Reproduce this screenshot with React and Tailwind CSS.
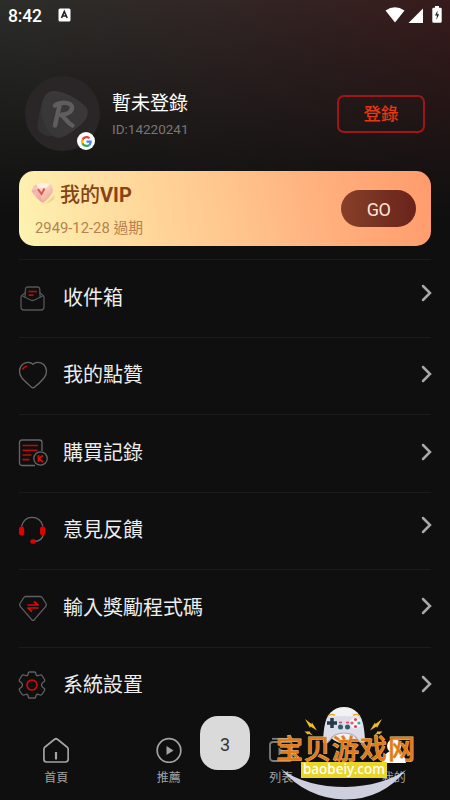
import React from 'react';

const InboxIcon = () => (
  <svg width="30" height="30" viewBox="0 0 30 30" fill="none" stroke="#555" strokeWidth="1.3" strokeLinejoin="round">
    <path d="M7.500 9.500 L4.500 12 Q3 13 3 14.500 V24 Q3 27 6 27 H23 Q26 27 26 24 V14.500 Q26 13 24.500 12 L21.500 9.500" />
    <path d="M3.500 12.500 L12.500 17 Q14.500 18 16.500 17 L25.500 12.500" />
    <path d="M7 14.500 L7.500 6 Q7.700 4 9.500 4 H19.500 Q21.500 4 21.700 6 L22.200 14.500" />
    <path d="M10.500 8.500 H19 M10.500 12.200 H15.500" stroke="#b80d0d" strokeWidth="1.700" />
  </svg>
);

const HeartIcon = () => (
  <svg width="30" height="30" viewBox="0 0 30 30" fill="none" stroke="#666" strokeWidth="1.300" strokeLinejoin="round">
    <path d="M15 4.300 C12.500 1.700 8 1.700 5 4 C0.500 7.500 0.500 14 4 18 C7 21.500 10.500 24.500 13.300 27 Q15 28.500 16.700 27 C20 24.500 23 21.500 26 18 C29.500 14 29.500 7.500 25 4 C22 1.700 17.500 1.700 15 4.300 Z" />
    <path d="M4.500 9.500 Q5.500 7.300 9 6" stroke="#c80d0d" strokeWidth="1.800" />
  </svg>
);

const RecordIcon = () => (
  <svg width="30" height="30" viewBox="0 0 30 30" fill="none" stroke="#666" strokeWidth="1.300">
    <path d="M17 27.500 H4 Q1.500 27.500 1.500 25 V4.500 Q1.500 2 4 2 H21.500 Q24 2 24 4.500 V13" />
    <path d="M4.500 7.500 H20 M4.500 12.300 H19.500 M4.500 17 H13.500 M4.500 21.700 H11.500" stroke="#b80d0d" strokeWidth="1.700" />
    <circle cx="22.500" cy="20.500" r="6.700" />
    <path d="M20.500 17.300 V24 M24.800 17.300 L21 20.800 L25 24" stroke="#d80c0c" strokeWidth="1.800" />
  </svg>
);

const HeadsetIcon = () => (
  <svg width="30" height="30" viewBox="0 0 30 30" fill="none">
    <path d="M3.500 11.500 C5 5.500 9 2.300 14 2.300 C19 2.300 23.500 5.500 25 11.500 M25.500 19 C24.500 24 21 26.500 16 26.500" stroke="#666" strokeWidth="1.300" />
    <rect x="1" y="11.500" width="5.200" height="9" rx="2.400" fill="#e30000" />
    <rect x="22" y="11.500" width="5.200" height="9" rx="2.400" fill="#e30000" />
    <rect x="12.300" y="24.300" width="5.700" height="4.500" rx="2.200" fill="#e30000" />
  </svg>
);

const GemIcon = () => (
  <svg width="30" height="30" viewBox="0 0 30 30" fill="none" stroke="#606060" strokeWidth="1.300" strokeLinejoin="round">
    <path d="M8 3.500 H22 Q23.500 3.500 24.500 5 L28 10.500 Q29 12 27.800 13.300 L16.300 26.700 Q15 28 13.700 26.700 L2.200 13.300 Q1 12 2 10.500 L5.500 5 Q6.500 3.500 8 3.500 Z" />
    <path d="M9.500 12 H20 L16 8.500 M20.500 15 H10 L14 18.500" stroke="#d90c0c" strokeWidth="1.700" />
  </svg>
);

const GearIcon = () => (
  <svg width="30" height="30" viewBox="0 0 30 30" fill="none" stroke="#606060" strokeWidth="1.300" strokeLinejoin="round">
    <path d="M11.300 2 H16.700 Q17.500 2 17.700 3 L18 4.500 Q18.300 6 20 5.700 L22 5 Q23.500 4.700 24.300 6 L26.500 9.500 Q27.200 10.800 26 11.700 L24.500 12.800 Q23.500 14 23.500 15 Q23.500 16 24.500 17.200 L26 18.300 Q27.200 19.200 26.500 20.500 L24.300 24 Q23.500 25.300 22 25 L20 24.300 Q18.300 24 18 25.500 L17.700 27 Q17.500 28 16.700 28 H11.300 Q10.500 28 10.300 27 L10 25.500 Q9.700 24 8 24.300 L6 25 Q4.500 25.300 3.700 24 L1.500 20.500 Q0.800 19.200 2 18.300 L3.500 17.200 Q4.500 16 4.500 15 Q4.500 14 3.500 12.800 L2 11.700 Q0.800 10.800 1.500 9.500 L3.700 6 Q4.500 4.700 6 5 L8 5.700 Q9.700 6 10 4.500 L10.300 3 Q10.500 2 11.300 2 Z" />
    <circle cx="14" cy="15" r="5" stroke="#c90d0d" strokeWidth="1.700" />
  </svg>
);

const menu = [
  { label: '收件箱', Icon: InboxIcon, shift: '-mt-[11px]' },
  { label: '我的點贊', Icon: HeartIcon, shift: '-mt-[4px]' },
  { label: '購買記錄', Icon: RecordIcon, shift: '-mt-[3px]' },
  { label: '意見反饋', Icon: HeadsetIcon, shift: '-mt-[11px]' },
  { label: '輸入獎勵程式碼', Icon: GemIcon, shift: '-mt-[4px]' },
  { label: '系統設置', Icon: GearIcon, shift: '-mt-[4px]' },
];

const StatusBar = () => (
  <div className="flex h-8 items-center pl-2 pr-[8px] text-white">
    <span className="text-[17.500px] leading-8 font-medium tracking-[-0.200px]">8:42</span>
    <svg className="-mt-[2px] ml-[16px]" width="13" height="14" viewBox="0 0 13 14">
      <rect x="0.500" y="0.500" width="12" height="13" rx="1.500" fill="#fff" />
      <path d="M3.500 10 L6.300 3.500 L9.200 10 M4.700 8 H8" fill="none" stroke="#222" strokeWidth="1.600" />
    </svg>
    <svg className="-mt-[2px] ml-auto" width="20" height="16" viewBox="0 0 20 16">
      <path d="M0.500 3.500 Q10 -3 19.500 3.500 L10 15.500 Z" fill="#fff" />
    </svg>
    <svg className="-mt-px ml-[3px]" width="15" height="15" viewBox="0 0 15 15">
      <path d="M15 0.500 V15 H0.500 Z" fill="#fff" />
    </svg>
    <svg className="-mt-[3px] ml-[9px]" width="10" height="17" viewBox="0 0 10 17">
      <path d="M3 0 H7 V1.800 H8.500 Q9.700 1.800 9.700 3 V15.500 Q9.700 16.700 8.500 16.700 H1.500 Q0.300 16.700 0.300 15.500 V3 Q0.300 1.800 1.500 1.800 H3 Z" fill="#fff" />
      <path d="M5.500 4.500 L3 9.500 H5 L4.300 14 L7.200 8.300 H5.300 Z" fill="#222" />
    </svg>
  </div>
);

const Avatar = () => (
  <div className="relative h-[75px] w-[75px] rounded-full bg-[#2a2628]">
    <svg width="75" height="75" viewBox="0 0 75 75" fill="none">
      <path d="M22 17 C30 13 36 21 30 59 C24 63 15 58 13 53 C11 49 17 22 22 17 Z" fill="#333132" />
      <path d="M28 15 C38 14 58 25 62 33 C66 42 54 52 40 60 C30 66 22 57 18 44 C14 30 18 16 28 15 Z" fill="#393738" />
      <path d="M35 27.500 L30 49.500 M30 29.500 C35 26 46 25.500 47 31 C47.500 36.500 41 38.500 36 39 C40 41 42.500 47.500 47.500 49.500" stroke="#5f5e5e" strokeWidth="4.500" strokeLinecap="round" strokeLinejoin="round" />
    </svg>
    <div className="absolute bottom-px right-[5px] flex h-[18px] w-[18px] items-center justify-center rounded-full bg-white">
      <svg width="11" height="11" viewBox="0 0 48 48">
        <path fill="#EA4335" d="M24 9.500c3.500 0 6.700 1.200 9.200 3.600l6.900-6.900C35.900 2.400 30.500 0 24 0 14.600 0 6.500 5.400 2.600 13.200l8 6.200C12.400 13.700 17.700 9.500 24 9.500z" />
        <path fill="#4285F4" d="M47 24.500c0-1.600-.2-3.100-.4-4.500H24v9h12.900c-.6 3-2.300 5.500-4.800 7.200l7.700 6C44.400 38 47 31.800 47 24.500z" />
        <path fill="#FBBC05" d="M10.500 28.600A14.500 14.500 0 0 1 10.500 19.400l-8-6.200a24 24 0 0 0 0 21.600z" />
        <path fill="#34A853" d="M24 48c6.500 0 11.900-2.100 15.800-5.800l-7.700-6c-2.200 1.500-4.900 2.300-8.100 2.300-6.300 0-11.600-4.200-13.500-9.900l-8 6.200C6.500 42.600 14.600 48 24 48z" />
      </svg>
    </div>
  </div>
);

const VipGem = () => (
  <svg width="26" height="24" viewBox="0 0 26 24">
    <defs>
      <linearGradient id="gem" x1="0" y1="0" x2="1" y2="1">
        <stop offset="0" stopColor="#f09a92" />
        <stop offset="0.350" stopColor="#fde0cf" />
        <stop offset="0.700" stopColor="#f2b6a5" />
        <stop offset="1" stopColor="#e8b879" />
      </linearGradient>
    </defs>
    <path d="M14 22 L24 13 L23 17 Q20 20 14 22 Z" fill="#e3b877" opacity="0.500" />
    <path d="M5 2.500 Q12 0 19 2 Q23 6 21.500 10 Q18 17 12 21 Q5 16.500 0.500 9 Q2 4.500 5 2.500 Z" fill="url(#gem)" />
    <path d="M5 2.500 Q12 0 19 2 L16 5.500 L8 6.500 Z" fill="#fff3e4" opacity="0.850" />
    <path d="M0.500 9 L7 6.500 L12 21 Q5 16.500 0.500 9 Z" fill="#e99195" opacity="0.500" />
    <path d="M7 7 L10.500 12 L13.500 6.500" fill="none" stroke="#df5550" strokeWidth="2" />
  </svg>
);

const NavItem = ({ label, children }) => (
  <div className="flex w-[112.5px] flex-col items-center text-[#a3a3a3]">
    {children}
    <span className="mt-[6px] text-[12px] leading-[18px]">{label}</span>
  </div>
);

const Bolts = ({ className }) => (
  <svg className={className} width="14" height="18" viewBox="0 0 14 18">
    <path d="M1 0 L7.500 5 L8 3.500 L13 11.500 L6.500 7.500 L6 9 Z" fill="#f1bd22" />
    <path d="M0.500 12.500 L6 12.500 L6 13.500 L9 16.500 L4.500 14.800 L4 15.800 Z" fill="#f1bd22" />
  </svg>
);

const Watermark = () => (
  <div className="absolute bottom-0 left-[274px] h-[95px] w-[144px]">
    <svg className="absolute left-0 top-0" width="144" height="95" viewBox="0 0 144 95">
      <path d="M7 64 Q32 82 72 82 Q108 81 132 65 Q108 95 70 94.500 Q32 93 7 64 Z" fill="#cdcfdd" />
      <ellipse cx="70" cy="20" rx="18.500" ry="18" fill="#f2f2f2" />
      <path d="M54 12 Q70 10 86 12 Q90 16 91 35 Q89 41 84 35 Q80 28 70 28 Q60 28 56 35 Q51 41 49 36 Q50 16 54 12 Z" fill="#dcdde9" />
      <path d="M49 36 Q51 41 56 35 Q60 28 70 28 Q80 28 84 35 Q89 41 91 35" fill="none" stroke="#a9abc0" strokeWidth="1.200" />
      <path d="M54 11 Q57 8.500 61 10 M79 10 Q83 8.500 86 11" stroke="#e8aa25" strokeWidth="1.500" fill="none" />
      <path d="M58 13 V23 M53 18 H63" stroke="#233b4b" strokeWidth="3.500" />
      <circle cx="81.500" cy="18" r="5.500" fill="#f7f7fb" />
      <circle cx="81.500" cy="14.500" r="1.600" fill="#de4a46" />
      <circle cx="81.500" cy="21.500" r="1.600" fill="#de4a46" />
      <circle cx="78" cy="18" r="1.600" fill="#d9586c" />
      <circle cx="85" cy="18" r="1.600" fill="#39a0ae" />
      <circle cx="66.500" cy="22" r="2.500" fill="#315d6b" />
      <circle cx="73.500" cy="22" r="2.500" fill="#315d6b" />
      <path d="M65 17.500 H68 M72 17.500 H75" stroke="#d84955" strokeWidth="1.500" />
    </svg>
    <Bolts className="absolute left-[30px] top-[14px]" />
    <Bolts className="absolute left-[95px] top-[14px] -scale-x-100" />
    <div className="absolute left-[2px] top-[29px] whitespace-nowrap font-['Noto_Sans_CJK_SC',sans-serif] text-[27px] font-medium leading-[27px] tracking-[1px] text-[#e07c17] [-webkit-text-stroke:0.900px_#eec38d] [paint-order:stroke_fill]">宝贝游戏网</div>
    <div className="absolute left-[27px] top-[57px] h-4 w-[86px] bg-[#e9d526] text-center font-['Noto_Sans',sans-serif] text-[13.500px] font-medium leading-[15px] text-white">baobeiy.com</div>
  </div>
);

const App = () => {
  return (
    <div className="relative flex h-[800px] w-[450px] flex-col overflow-hidden bg-[#0f0f0f] bg-[linear-gradient(180deg,transparent_0,#0f0f0f_215px),linear-gradient(90deg,#2b2d29_0%,#322625_50%,#381b1c_100%)] font-[Roboto,'Noto_Sans_CJK_TC',sans-serif]">
      <StatusBar />
      <div className="mt-[44px] flex h-[75px] items-center pl-[25px] pr-[25px]">
        <Avatar />
        <div className="ml-[12px]">
          <div className="mt-[2px] text-[19px] leading-[27px] text-white">暫未登錄</div>
          <div className="mt-[2px] text-[13.500px] leading-[20px] text-[#777]">ID:14220241</div>
        </div>
        <button className="ml-auto h-[38px] w-[88px] rounded-[7px] border-2 border-[#a01618] pt-px text-[17.500px] font-medium text-[#e6380e]">登錄</button>
      </div>

      <div className="mx-[19px] mt-[20px] flex h-[75px] items-center rounded-[15px] bg-[linear-gradient(78deg,#fdf3b1_0%,#ffdc9f_25%,#ffc88f_48%,#ffb17e_72%,#ff9b6c_100%)] pl-3 pr-[15px]">
        <div className="h-full">
          <div className="flex h-[46px] items-center">
            <VipGem />
            <span className="ml-[3px] mt-px text-[20px] font-medium text-[#864313]">我的<span className="font-bold">VIP</span></span>
          </div>
          <div className="ml-1 mt-px text-[14.800px] leading-[20px] text-[#b58250]">2949-12-28 過期</div>
        </div>
        <button className="ml-auto h-[37px] w-[75px] rounded-full bg-linear-to-r from-[#864029] to-[#69231b] pt-[2px] text-[18px] tracking-[-0.500px] text-[#ffe5d6]">GO</button>
      </div>

      <div className="mx-[19px] mt-[13px]">
        {menu.map(({ label, Icon, shift }) => (
          <div key={label} className="flex h-[77.5px] items-center border-t border-[#1c1c1c]">
            <div className="-ml-px -mt-px"><Icon /></div>
            <span className="-mt-px ml-[15px] text-[20px] leading-[28px] text-[#ededed]">{label}</span>
            <svg className={`-mr-px ml-auto ${shift}`} width="11" height="18" viewBox="0 0 11 18" fill="none" stroke="#a9a9a9" strokeWidth="2.500" strokeLinecap="round">
              <path d="M2 2 L9 9 L2 16" />
            </svg>
          </div>
        ))}
      </div>

      <div className="absolute bottom-0 left-0 flex h-[63px] w-full">
        <NavItem label="首頁">
          <svg width="26" height="26" viewBox="0 0 26 26" fill="none" stroke="currentColor" strokeWidth="1.700" strokeLinejoin="round">
            <path d="M11.300 2.500 Q13 1 14.700 2.500 L24 10 Q25.200 11 25.200 12.500 V22 Q25.200 25 22.500 25 H3.500 Q0.900 25 0.900 22 V12.500 Q0.900 11 2 10 Z" />
            <path d="M13 15 V22.500" strokeWidth="2.200" />
          </svg>
        </NavItem>
        <NavItem label="推薦">
          <svg width="26" height="26" viewBox="0 0 26 26" fill="none" stroke="currentColor" strokeWidth="1.700">
            <circle cx="13" cy="13.500" r="11.800" />
            <path d="M10.500 9 L17.500 13.500 L10.500 18 Z" fill="currentColor" stroke="none" />
          </svg>
        </NavItem>
        <NavItem label="列表">
          <svg width="26" height="26" viewBox="0 0 26 26" fill="none" stroke="#7d7d7d" strokeWidth="1.800">
            <rect x="2" y="5" width="22" height="19" rx="3" />
            <path d="M4 1.800 H22" />
            <path d="M10.500 10.500 L17 14.500 L10.500 18.500 Z" fill="#7d7d7d" stroke="none" />
          </svg>
        </NavItem>
        <NavItem label="我的">
          <svg width="26" height="26" viewBox="0 0 26 26" fill="#fff">
            <circle cx="13" cy="9" r="7" />
            <path d="M9 14 H17 Q25 18 25 27 H1 Q1 18 9 14 Z" />
          </svg>
        </NavItem>
      </div>
      <div className="absolute left-[200px] top-[716px] flex h-[54px] w-[50px] items-center justify-center rounded-[18px] bg-[#dadada] pt-[2px] text-[18px] text-[#333]">3</div>
      <Watermark />
    </div>
  );
};

export default App;
